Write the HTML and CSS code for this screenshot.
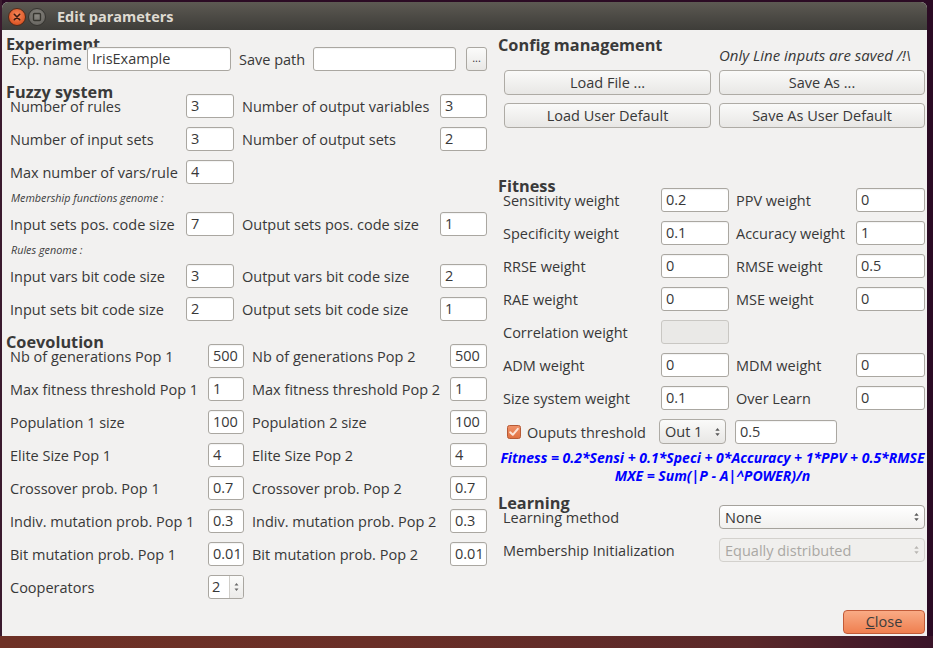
FILE: index.html
```html
<!DOCTYPE html>
<html>
<head>
<meta charset="utf-8">
<title>Edit parameters</title>
<link rel="stylesheet" href="styles.css">
</head>
<body>
<div class="desk">
  <div class="window">
    <div class="titlebar">
      <div class="wbtn wclose"><svg width="18" height="18" viewBox="0 0 18 18"><defs><radialGradient id="cg" cx="50%" cy="40%" r="60%"><stop offset="0" stop-color="#f88a5c"/><stop offset="1" stop-color="#d9501f"/></radialGradient></defs><circle cx="9" cy="9" r="8.5" fill="url(#cg)" stroke="#4a2a1c" stroke-width="1"/><path d="M6.3 6.3 L11.7 11.7 M11.7 6.3 L6.3 11.7" stroke="#3a1a10" stroke-width="1.6" stroke-linecap="round"/></svg></div>
      <div class="wbtn wmin"><svg width="18" height="18" viewBox="0 0 18 18"><defs><radialGradient id="mg" cx="50%" cy="40%" r="60%"><stop offset="0" stop-color="#8a8882"/><stop offset="1" stop-color="#66645f"/></radialGradient></defs><circle cx="9" cy="9" r="8.5" fill="url(#mg)" stroke="#34332f" stroke-width="1"/><rect x="5.5" y="5.5" width="7" height="7" rx="1" fill="none" stroke="#36352f" stroke-width="1.4"/></svg></div>
      <div class="wtitle">Edit parameters</div>
    </div>
    <div class="content">
      <div class="col-left">
        <div class="sh sh-first">Experiment</div>
        <div class="row exp">
          <span class="lbl">Exp. name</span>
          <span class="inp">IrisExample</span>
          <span class="lbl lbl-save">Save path</span>
          <span class="inp"></span>
          <span class="dots">...</span>
        </div>

        <div class="sh">Fuzzy system</div>
        <div class="row fz"><span class="lbl">Number of rules</span><span class="inp">3</span><span class="lbl l2">Number of output variables</span><span class="inp">3</span></div>
        <div class="row fz mt9"><span class="lbl">Number of input sets</span><span class="inp">3</span><span class="lbl l2">Number of output sets</span><span class="inp">2</span></div>
        <div class="row fz mt9"><span class="lbl">Max number of vars/rule</span><span class="inp">4</span></div>
        <div class="cap">Membership functions genome :</div>
        <div class="row fz mt7"><span class="lbl">Input sets pos. code size</span><span class="inp">7</span><span class="lbl l2">Output sets pos. code size</span><span class="inp">1</span></div>
        <div class="cap">Rules genome :</div>
        <div class="row fz mt7"><span class="lbl">Input vars bit code size</span><span class="inp">3</span><span class="lbl l2">Output vars bit code size</span><span class="inp">2</span></div>
        <div class="row fz mt9"><span class="lbl">Input sets bit code size</span><span class="inp">2</span><span class="lbl l2">Output sets bit code size</span><span class="inp">1</span></div>

        <div class="sh">Coevolution</div>
        <div class="row co"><span class="lbl">Nb of generations Pop 1</span><span class="inp">500</span><span class="lbl l2">Nb of generations Pop 2</span><span class="inp">500</span></div>
        <div class="row co mt9"><span class="lbl">Max fitness threshold Pop 1</span><span class="inp">1</span><span class="lbl l2">Max fitness threshold Pop 2</span><span class="inp">1</span></div>
        <div class="row co mt9"><span class="lbl">Population 1 size</span><span class="inp">100</span><span class="lbl l2">Population 2 size</span><span class="inp">100</span></div>
        <div class="row co mt9"><span class="lbl">Elite Size Pop 1</span><span class="inp">4</span><span class="lbl l2">Elite Size Pop 2</span><span class="inp">4</span></div>
        <div class="row co mt9"><span class="lbl">Crossover prob. Pop 1</span><span class="inp">0.7</span><span class="lbl l2">Crossover prob. Pop 2</span><span class="inp">0.7</span></div>
        <div class="row co mt9"><span class="lbl">Indiv. mutation prob. Pop 1</span><span class="inp">0.3</span><span class="lbl l2">Indiv. mutation prob. Pop 2</span><span class="inp">0.3</span></div>
        <div class="row co mt9"><span class="lbl">Bit mutation prob. Pop 1</span><span class="inp">0.01</span><span class="lbl l2">Bit mutation prob. Pop 2</span><span class="inp">0.01</span></div>
        <div class="row co mt9"><span class="lbl">Cooperators</span>
          <span class="spin"><span class="spin-val">2</span><span class="spin-arr"><svg width="7" height="14" viewBox="0 0 7 14"><path d="M3.5 3 L5.5 5.5 L1.5 5.5 Z M3.5 11 L5.5 8.5 L1.5 8.5 Z" fill="#6a6a6a"/></svg></span></span>
        </div>
      </div>

      <div class="col-right">
        <div class="cfg-head">
          <div class="sh sh-cfg">Config management</div>
          <div class="note">Only Line inputs are saved /!\</div>
        </div>
        <div class="btn-grid">
          <span class="btn">Load File ...</span>
          <span class="btn">Save As ...</span>
          <span class="btn">Load User Default</span>
          <span class="btn">Save As User Default</span>
        </div>

        <div class="sh sh-fit">Fitness</div>
        <div class="row fit"><span class="lbl">Sensitivity weight</span><span class="inp">0.2</span><span class="lbl l2">PPV weight</span><span class="inp">0</span></div>
        <div class="row fit mt9"><span class="lbl">Specificity weight</span><span class="inp">0.1</span><span class="lbl l2">Accuracy weight</span><span class="inp">1</span></div>
        <div class="row fit mt9"><span class="lbl">RRSE weight</span><span class="inp">0</span><span class="lbl l2">RMSE weight</span><span class="inp">0.5</span></div>
        <div class="row fit mt9"><span class="lbl">RAE weight</span><span class="inp">0</span><span class="lbl l2">MSE weight</span><span class="inp">0</span></div>
        <div class="row fit mt9"><span class="lbl">Correlation weight</span><span class="inp disabled"></span></div>
        <div class="row fit mt9"><span class="lbl">ADM weight</span><span class="inp">0</span><span class="lbl l2">MDM weight</span><span class="inp">0</span></div>
        <div class="row fit mt9"><span class="lbl">Size system weight</span><span class="inp">0.1</span><span class="lbl l2">Over Learn</span><span class="inp">0</span></div>
        <div class="row thr mt9">
          <span class="chk"><svg width="14" height="14" viewBox="0 0 14 14"><defs><linearGradient id="kg" x1="0" y1="0" x2="0" y2="1"><stop offset="0" stop-color="#f0926a"/><stop offset="1" stop-color="#e0703f"/></linearGradient></defs><rect x="0.5" y="0.5" width="13" height="13" rx="2" fill="url(#kg)" stroke="#b65a36"/><path d="M3.2 7.2 L5.8 9.8 L10.8 3.8" fill="none" stroke="#fbe3d6" stroke-width="2" stroke-linecap="round" stroke-linejoin="round"/></svg></span>
          <span class="lbl thr-lbl">Ouputs threshold</span>
          <span class="combo cbtn"><span>Out 1</span><svg class="arr" width="7" height="14" viewBox="0 0 7 14"><path d="M3.5 3 L5.7 5.8 L1.3 5.8 Z M3.5 11 L5.7 8.2 L1.3 8.2 Z" fill="#5a5a5a"/></svg></span>
          <span class="inp thr-inp">0.5</span>
        </div>
        <div class="formula">
          <div>Fitness = 0.2*Sensi + 0.1*Speci + 0*Accuracy + 1*PPV + 0.5*RMSE</div>
          <div>MXE = Sum(|P - A|^POWER)/n</div>
        </div>

        <div class="sh sh-learn">Learning</div>
        <div class="row learn"><span class="lbl">Learning method</span><span class="combo cwhite"><span>None</span><svg class="arr" width="7" height="14" viewBox="0 0 7 14"><path d="M3.5 3 L5.7 5.8 L1.3 5.8 Z M3.5 11 L5.7 8.2 L1.3 8.2 Z" fill="#5a5a5a"/></svg></span></div>
        <div class="row learn mt9"><span class="lbl">Membership Initialization</span><span class="combo cdis"><span>Equally distributed</span><svg class="arr" width="7" height="14" viewBox="0 0 7 14"><path d="M3.5 3 L5.7 5.8 L1.3 5.8 Z M3.5 11 L5.7 8.2 L1.3 8.2 Z" fill="#b8b6b2"/></svg></span></div>

        <div class="close-wrap"><span class="close-btn"><u>C</u>lose</span></div>
      </div>
    </div>
  </div>
</div>
<div class="desk-bottom"></div>
</body>
</html>
```

FILE: styles.css
```css
* { box-sizing: border-box; }
html, body { margin: 0; padding: 0; }
body {
  width: 933px;
  height: 648px;
  overflow: hidden;
  background: #2b0b24;
  font-family: "Open Sans", "DejaVu Sans", sans-serif;
  font-size: 14.5px;
  color: #383838;
}
.desk {
  padding: 2px 0 0 2px;
  height: 636px;
  background: linear-gradient(to right, #3a1a2e 0, #3a1a2e 2px, #2b0b24 2px);
}
.window {
  width: 925px;
  height: 634px;
  background: #f2f1f0;
  border-radius: 6px 6px 0 0;
  overflow: hidden;
  display: flex;
  flex-direction: column;
}
.titlebar {
  height: 28px;
  flex: none;
  background: linear-gradient(to bottom, #5d5a53 0%, #4b4944 55%, #3e3d39 100%);
  display: flex;
  align-items: center;
  padding-left: 6px;
}
.wbtn { width: 18px; height: 18px; margin-top: 1px; }
.wbtn svg { display: block; }
.wmin { margin-left: 2px; }
.wtitle {
  margin-left: 11px;
  font-weight: bold;
  font-size: 14.5px;
  color: #dfdbd2;
}
.content {
  flex: 1;
  display: flex;
  padding-top: 6px;
}
.col-left {
  width: 490px;
  padding-left: 4px;
}
.col-right {
  width: 429px;
  margin-left: 6px;
  display: flex;
  flex-direction: column;
}
.sh {
  font-weight: bold;
  font-size: 16.3px;
  line-height: 14px;
  height: 9px;
  margin-top: 14px;
  white-space: nowrap;
  color: #3a3a3a;
}
.sh-first { margin-top: 1px; height: 10px; }
.row {
  height: 24px;
  display: grid;
  align-items: center;
}
.mt9 { margin-top: 9px; }
.mt7 { margin-top: 7px; }
.lbl { white-space: nowrap; line-height: 16px; padding-top: 2px; }
.l2 { padding-left: 8px; }
.inp {
  height: 24px;
  border: 1px solid #aaa7a1;
  border-radius: 3px;
  background: #fff;
  padding-left: 4px;
  line-height: 22px;
  white-space: nowrap;
  overflow: hidden;
  box-shadow: inset 0 1px 1px rgba(0,0,0,0.05);
}
.inp.disabled {
  background: #eae9e7;
  border-color: #c9c7c3;
  box-shadow: none;
}
.exp {
  grid-template-columns: 76px 144px 82px 143px 31px;
  padding-left: 5px;
}
.exp .lbl-save { padding-left: 8px; }
.exp .dots {
  margin-left: 10px;
  width: 21px;
  height: 24px;
  border: 1px solid #aaa7a1;
  border-radius: 3px;
  background: linear-gradient(#fbfbfa, #e9e8e6);
  font-size: 11px;
  text-align: center;
  line-height: 20px;
}
.fz {
  padding-left: 4px;
  grid-template-columns: 176px 48px 206px 47px;
}
.co {
  padding-left: 4px;
  grid-template-columns: 198px 36px 206px 37px;
}
.cap {
  margin-top: 7px;
  height: 14px;
  line-height: 14px;
  font-size: 10.8px;
  font-style: italic;
  padding-left: 5px;
  color: #3c3c3c;
}
.spin {
  height: 24px;
  border: 1px solid #aaa7a1;
  border-radius: 3px;
  background: #fff;
  display: flex;
}
.spin-val { width: 20px; padding-left: 3px; line-height: 22px; }
.spin-arr {
  flex: 1;
  border-left: 1px solid #d0cec9;
  background: linear-gradient(#fbfbfa, #ecebe9);
  border-radius: 0 2px 2px 0;
  display: flex;
  align-items: center;
  justify-content: center;
}
.spin-arr svg { display: block; }

/* right column */
.cfg-head {
  height: 34px;
  display: grid;
  grid-template-columns: 221px 208px;
}
.sh-cfg { margin-top: 2px; height: 16px; }
.note {
  font-style: italic;
  font-size: 15px;
  margin-top: 10px;
  line-height: 18px;
  white-space: nowrap;
}
.btn-grid {
  margin-left: 6px;
  display: grid;
  grid-template-columns: 207px 206px;
  column-gap: 8px;
  row-gap: 8px;
}
.btn {
  height: 25px;
  border: 1px solid #aeaba5;
  border-radius: 4px;
  background: linear-gradient(#fafaf9, #e8e7e5);
  text-align: center;
  line-height: 23px;
  white-space: nowrap;
}
.sh-fit { margin-top: 51px; }
.fit {
  padding-left: 5px;
  grid-template-columns: 158px 68px 127px 69px;
}
.fit .l2 { padding-left: 7px; }
.thr {
  padding-left: 9px;
  grid-template-columns: 14px 138px 67px 111px;
  column-gap: 0;
}
.chk { width: 14px; height: 14px; }
.chk svg { display: block; }
.thr-lbl { padding-left: 6px; }
.thr-inp { margin-left: 9px; }
.combo {
  height: 25px;
  border: 1px solid #aeaba5;
  border-radius: 4px;
  display: flex;
  align-items: center;
  justify-content: space-between;
  padding: 0 4px 0 5px;
  white-space: nowrap;
}
.combo .arr { display: block; }
.cbtn { background: linear-gradient(#fafaf9, #e8e7e5); }
.cwhite { background: linear-gradient(#ffffff, #f1f0ee); border-color: #a5a29c; height: 24px; }
.cdis { background: #f0efed; border-color: #d3d1cd; color: #aaa8a4; height: 24px; }
.formula {
  margin-top: 6px;
  text-align: center;
  color: #0000ff;
  font-weight: bold;
  font-style: italic;
  font-size: 14px;
  line-height: 18px;
  white-space: nowrap;
}
.sh-learn { margin-top: 11px; }
.learn {
  padding-left: 5px;
  grid-template-columns: 216px 206px;
}
.close-wrap {
  margin-top: auto;
  margin-bottom: 2px;
  display: flex;
  justify-content: flex-end;
  padding-right: 2px;
}
.close-btn {
  width: 82px;
  height: 24px;
  border: 1px solid #c25b38;
  border-radius: 4px;
  background: linear-gradient(#f9ab85, #ef7f50);
  text-align: center;
  line-height: 22px;
  color: #3c3c3c;
}
.close-btn u { text-decoration: underline; }
.desk-bottom {
  height: 12px;
  background: linear-gradient(to right, #6e3126 0%, #6a2f27 40%, #5a2829 80%, #3a1429 100%);
}
```
